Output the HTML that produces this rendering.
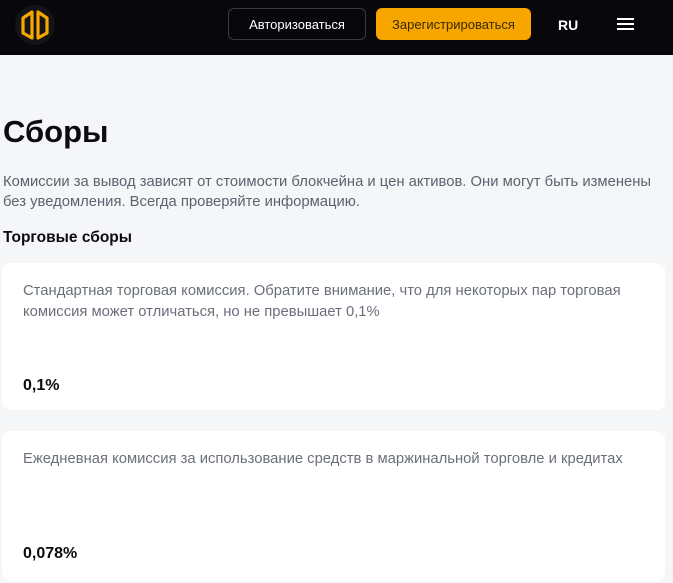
<!DOCTYPE html>
<html><head><meta charset="utf-8"><style>
*{margin:0;padding:0;box-sizing:border-box}
body{width:673px;height:583px;overflow:hidden;background:#f5f6f8;font-family:"Liberation Sans",sans-serif;position:relative}
.hdr{position:absolute;left:0;top:0;width:673px;height:55px;background:#08080c}
.logo{position:absolute;left:15px;top:5px;width:40px;height:40px;border-radius:50%;background:#141417}
.btn{position:absolute;top:8px;height:32px;border-radius:6px;font-size:13px;display:flex;align-items:center;justify-content:center}
.b1{left:228px;width:138px;border:1px solid #3a3a40;color:#fff}
.b2{left:376px;width:155px;background:#f7a600;color:#3a2a00}
.ru{position:absolute;left:558px;top:17px;color:#fff;font-weight:bold;font-size:14px}
.hb{position:absolute;left:617px;width:17px;height:2px;background:#fff}
h1{position:absolute;left:3px;top:114px;font-size:31px;font-weight:bold;color:#0b0b10}
.p{position:absolute;left:3px;top:172px;width:668px;font-size:14.8px;line-height:20px;color:#5d6270}
h2{position:absolute;left:3px;top:229px;font-size:15.5px;font-weight:bold;color:#0b0b10}
.card{position:absolute;left:2px;width:663px;background:#fff;border-radius:8px}
.ct{position:absolute;left:21px;top:18px;font-size:14.8px;line-height:21px;color:#6a6f7a;width:620px}
.cv{position:absolute;left:21px;font-size:16px;font-weight:bold;color:#0b0b10}
</style></head><body>
<div class="hdr">
<div class="logo"><svg width="40" height="40" viewBox="0 0 40 40"><path d="M8 13 L17 7 L17 33 L8 28 Z M23 7 L32 13 L32 28 L23 33 Z" fill="none" stroke="#f7a600" stroke-width="3.2" stroke-linejoin="round"/></svg></div>
<div class="btn b1">Авторизоваться</div>
<div class="btn b2">Зарегистрироваться</div>
<div class="ru">RU</div>
<div class="hb" style="top:18px"></div><div class="hb" style="top:23px"></div><div class="hb" style="top:28px"></div>
</div>
<h1>Сборы</h1>
<div class="p">Комиссии за вывод зависят от стоимости блокчейна и цен активов. Они могут быть изменены без уведомления. Всегда проверяйте информацию.</div>
<h2>Торговые сборы</h2>
<div class="card" style="top:263px;height:147px"><div class="ct">Стандартная торговая комиссия. Обратите внимание, что для некоторых пар торговая комиссия может отличаться, но не превышает 0,1%</div><div class="cv" style="top:114px">0,1%</div></div>
<div class="card" style="top:431px;height:150px"><div class="ct">Ежедневная комиссия за использование средств в маржинальной торговле и кредитах</div><div class="cv" style="top:114px">0,078%</div></div>
</body></html>
